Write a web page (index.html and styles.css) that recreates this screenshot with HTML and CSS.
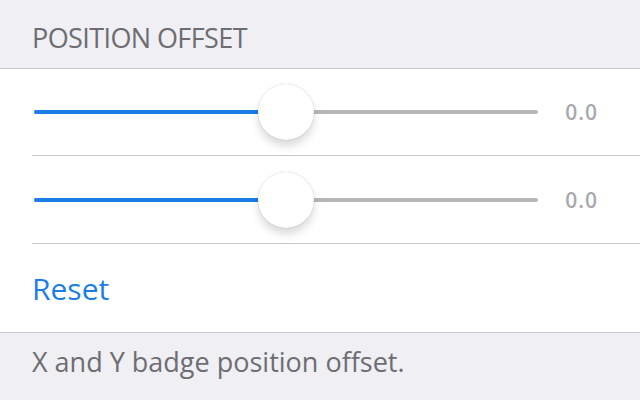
FILE: index.html
```html
<!DOCTYPE html>
<html lang="en">
<head>
    <meta charset="UTF-8">
    <title>Position Offset</title>
    <link rel="stylesheet" href="styles.css">
</head>
<body>
<div class="section-header">POSITION OFFSET</div>
<div class="group">
    <div class="row">
        <div class="slider">
            <div class="track-fill" style="width: 50%"></div>
            <div class="thumb" style="left: 50%"></div>
        </div>
        <span class="value">0.0</span>
    </div>
    <div class="row">
        <div class="slider">
            <div class="track-fill" style="width: 50%"></div>
            <div class="thumb" style="left: 50%"></div>
        </div>
        <span class="value">0.0</span>
    </div>
    <div class="row">
        <a class="action">Reset</a>
    </div>
</div>
<div class="section-footer">X and Y badge position offset.</div>
</body>
</html>
```

FILE: styles.css
```css
* {
    box-sizing: border-box;
    margin: 0;
    padding: 0;
}

body {
    font-family: "Open Sans", "Noto Sans", sans-serif;
    background-color: #efeff4;
    width: 640px;
    height: 400px;
    overflow: hidden;
}

/* Section header */
.section-header {
    height: 69px;
    padding: 21px 32px 0;
    font-size: 27px;
    line-height: 34px;
    letter-spacing: -0.6px;
    color: #6d6d72;
    border-bottom: 1px solid #c8c7cc;
}

/* Grouped rows */
.group {
    background: white;
    border-bottom: 1px solid #c8c7cc;
}

.row {
    height: 88px;
    margin-left: 32px;
    padding-right: 42px;
    display: flex;
    align-items: center;
    border-bottom: 1px solid #c8c7cc;
}

.row:first-child {
    height: 87px;
}

.row:last-child {
    border-bottom: none;
}

/* Slider */
.slider {
    position: relative;
    flex: 1;
    height: 4px;
    margin-left: 2px;
    border-radius: 2px;
    background-color: #b6b6b6;
}

.track-fill {
    height: 100%;
    border-radius: 2px;
    background-color: #1a7ee6;
}

.thumb {
    position: absolute;
    top: 50%;
    width: 56px;
    height: 56px;
    margin: -28px 0 0 -28px;
    border-radius: 50%;
    background: white;
    box-shadow: 0 0 1px rgba(0,0,0,0.25), 0 6px 8px rgba(0,0,0,0.15);
}

.value {
    width: 60px;
    text-align: right;
    font-size: 21px;
    font-weight: 600;
    letter-spacing: 1px;
    color: #a9a9ad;
}

.action {
    font-size: 30px;
    color: #1a7ee6;
    cursor: pointer;
}

/* Section footer */
.section-footer {
    padding: 12px 32px;
    font-size: 27px;
    line-height: 34px;
    color: #6d6d72;
}
```
